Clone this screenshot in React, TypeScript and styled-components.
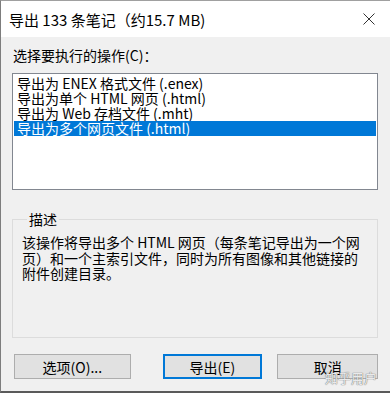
import React from "react";
import styled, { createGlobalStyle } from "styled-components";

const Global = createGlobalStyle`
  html, body { margin: 0; padding: 0; background: #f0f0f0; }
  body { font-family: "Noto Sans CJK SC", "Noto Sans", sans-serif; }
`;

const Window = styled.div`
  width: 390px;
  height: 393px;
  box-sizing: border-box;
  border-left: 1px solid #7d7d7d;
  border-top: 1px solid #a0a0a0;
  border-bottom: 2px solid #5a5a5a;
  background: #f0f0f0;
  display: flex;
  flex-direction: column;
  overflow: hidden;
`;

const TitleBar = styled.div`
  height: 36px;
  background: #ffffff;
  display: flex;
  align-items: center;
  justify-content: space-between;
  padding: 0 15px 0 8px;
  font-size: 15px;
  color: #000;
  flex: none;
`;

const Body = styled.div`
  flex: 1;
  display: flex;
  flex-direction: column;
  padding: 8px 12px 0 11px;
`;

const Label = styled.div`
  font-size: 14px;
  line-height: 20px;
  color: #000;
  padding-left: 1px;
  margin-bottom: 8px;
`;

const ListBox = styled.div`
  height: 117px;
  box-sizing: border-box;
  border: 1px solid #828790;
  background: #fff;
  padding: 2px 1px;
  display: flex;
  flex-direction: column;
`;

const Item = styled.div<{ $sel?: boolean }>`
  height: 15px;
  line-height: 15px;
  font-size: 14px;
  padding-left: 3px;
  white-space: nowrap;
  color: ${(p) => (p.$sel ? "#fff" : "#000")};
  background: ${(p) => (p.$sel ? "#0078d7" : "transparent")};
`;

const Group = styled.fieldset`
  margin: 21px 0 0 0;
  padding: 8px 9px 0 9px;
  height: 127px;
  box-sizing: border-box;
  border: 1px solid #dcdcdc;
  border-radius: 0;
`;

const Legend = styled.legend`
  font-size: 14px;
  padding: 0 2px;
  margin-left: 5px;
  color: #000;
  line-height: 16px;
`;

const Desc = styled.div`
  font-size: 14px;
  line-height: 15.5px;
  color: #000;
`;

const ButtonRow = styled.div`
  display: flex;
  align-items: center;
  margin-top: 16px;
  padding-left: 1px;
`;

const Btn = styled.div<{ $w: number; $def?: boolean; $ml: number }>`
  width: ${(p) => p.$w}px;
  height: 25px;
  margin-left: ${(p) => p.$ml}px;
  box-sizing: border-box;
  border: ${(p) => (p.$def ? "2px solid #0078d7" : "1px solid #adadad")};
  background: #e1e1e1;
  display: flex;
  align-items: center;
  justify-content: center;
  font-size: 14px;
  color: #000;
  position: relative;
`;

const Watermark = styled.span`
  position: absolute;
  right: 0px;
  top: 16px;
  font-size: 13px;
  line-height: 14px;
  color: rgba(255, 255, 255, 0.85);
  text-shadow: 0 0 1px #777, 0 0 1px #777;
`;

const CloseIcon = () => (
  <svg width="12" height="12" viewBox="0 0 12 12">
    <path d="M0.5 0.5 L11.5 11.5 M11.5 0.5 L0.5 11.5" stroke="#333" strokeWidth="1" fill="none" />
  </svg>
);

export default function App() {
  return (
    <>
      <Global />
      <Window>
        <TitleBar>
          <span>导出 133 条笔记（约15.7 MB)</span>
          <CloseIcon />
        </TitleBar>
        <Body>
          <Label>选择要执行的操作(C)：</Label>
          <ListBox>
            <Item>导出为 ENEX 格式文件 (.enex)</Item>
            <Item>导出为单个 HTML 网页 (.html)</Item>
            <Item>导出为 Web 存档文件 (.mht)</Item>
            <Item $sel>导出为多个网页文件 (.html)</Item>
          </ListBox>
          <Group>
            <Legend>描述</Legend>
            <Desc>
              该操作将导出多个 HTML 网页（每条笔记导出为一个网
              <br />
              页）和一个主索引文件，同时为所有图像和其他链接的
              <br />
              附件创建目录。
            </Desc>
          </Group>
          <ButtonRow>
            <Btn $w={117} $ml={1}>选项(O)...</Btn>
            <Btn $w={100} $ml={32} $def>导出(E)</Btn>
            <Btn $w={101} $ml={15}>
              取消
              <Watermark>知乎用户</Watermark>
            </Btn>
          </ButtonRow>
        </Body>
      </Window>
    </>
  );
}
